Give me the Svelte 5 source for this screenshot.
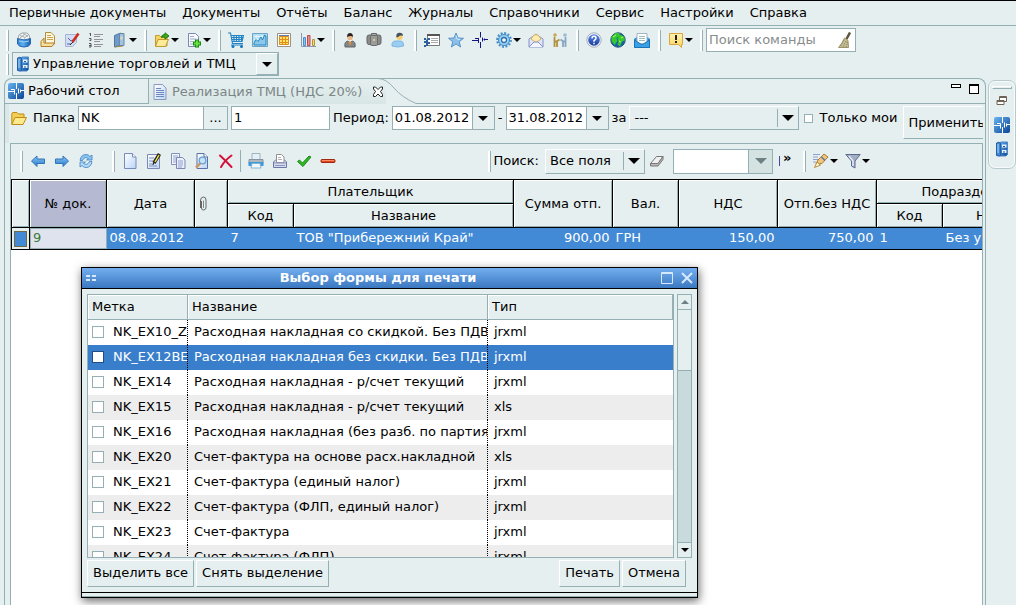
<script>
  const menus = ['Первичные документы', 'Документы', 'Отчёты', 'Баланс', 'Журналы', 'Справочники', 'Сервис', 'Настройки', 'Справка'];

  const toolbar = [
    [['box', 'Товары'], ['papers', 'Документы'], ['sign', 'Подпись'], ['list', 'Список'], ['book', 'Журнал', true]],
    [['folderGo', 'Открыть', true], ['docAdd', 'Создать', true]],
    [['cart', 'Продажи'], ['chart', 'График'], ['grid', 'Таблица'], ['bars', 'Диаграмма', true]],
    [['man', 'Сотрудник'], ['case', 'Портфель'], ['user', 'Контрагент']],
    [['log', 'Протокол'], ['star', 'Избранное'], ['cross', 'Рабочий стол'], ['gear', 'Параметры', true], ['mail', 'Почта'], ['deal', 'Сделки']],
    [['help', 'Помощь'], ['globe', 'Сайт'], ['letter', 'Письмо']],
    [['note', 'Заметка', true]]
  ];

  const docTools = [
    [['left', 'Назад'], ['right', 'Вперёд'], ['refresh', 'Обновить']],
    [['page', 'Новый'], ['edit', 'Изменить'], ['copy', 'Копировать'], ['preview', 'Просмотр'], ['del', 'Удалить']],
    [['printer', 'Печать'], ['print2', 'Печать формы'], ['check', 'Провести'], ['minus', 'Отменить']]
  ];

  let forms = $state([
    ['NK_EX10_ZN', 'Расходная накладная со скидкой. Без ПДВ', 'jrxml'],
    ['NK_EX12BEZ', 'Расходная накладная без скидки. Без ПДВ', 'jrxml'],
    ['NK_EX14', 'Расходная накладная - р/счет текущий', 'jrxml'],
    ['NK_EX15', 'Расходная накладная - р/счет текущий', 'xls'],
    ['NK_EX16', 'Расходная накладная (без разб. по партиям)', 'jrxml'],
    ['NK_EX20', 'Счет-фактура на основе расх.накладной', 'xls'],
    ['NK_EX21', 'Счет-фактура (единый налог)', 'jrxml'],
    ['NK_EX22', 'Счет-фактура (ФЛП, единый налог)', 'jrxml'],
    ['NK_EX23', 'Счет-фактура', 'jrxml'],
    ['NK_EX24', 'Счет-фактура (ФЛП)', 'jrxml']
  ].map(([code, name, type]) => ({ code, name, type, checked: false })));
  let selected = $state('NK_EX12BEZ');

  const setAll = (value) => forms.forEach((f) => (f.checked = value));

  const sheet = '<path d="M3 .5h7l3.500 3.500v11.500H3z" fill="url(#paper)" stroke="#5b6fa8"/><path d="M10 .5V4h3.500" fill="#fff" stroke="#5b6fa8"/>';
  const smallMan = '<path d="M3 15q-1-5.500 3-6l2 2 2-2q4 .5 3 6z"';

  const icons = {
    box: '<path d="M2 6l1-3 3-2 5 0 2 2 1 3-2 2H4z" fill="#f4f7f7" stroke="#9aa4a4"/><path d="M4 3.500l5 2M7 1.500l5 3M4 6l5-4M8 6.500l4-3.500" stroke="#a5abab"/><path d="M1.500 6.500q6.500 3 13 0V12q-1.500 3-6.500 3t-6.500-3z" fill="url(#tub)" stroke="#2468b4"/><path d="M3 9q5 2 10 0" stroke="#9cd2f8" fill="none"/>',
    papers: '<path d="M5.500.5h5.500L14.500 4v8h-9z" fill="#fff8dc" stroke="#b58a3c"/><path d="M7 3.500h4M7 5.500h6M7 7.500h6" stroke="#c9a253"/><path d="M1 9.500L4 6v5h10.500l-2.500 3.500H1z" fill="#f8df9c" stroke="#b08030"/>',
    sign: '<path d="M1.500 2.500h11v8l-4 4h-7z" fill="#d3ddf3" stroke="#a5b3d4"/><path d="M4 6l3 3 2-1M3 12h4" stroke="#4662a8" fill="none"/><path d="M14.500 1.500L8.500 10" stroke="#cf2a1b" stroke-width="2.500"/><path d="M9 10l-3 3" stroke="#333"/>',
    list: '<path d="M6 2.500h9M6 4.500h6M6 7.500h9M6 9.500h6M6 12.500h9M6 14.500h7" stroke="#909494"/><path d="M2.500 1v3M1.500 1.500h1M1 6.500h2v2H1.500M1 11.500h2v2H1M3 13v2H1" stroke="#555" fill="none"/>',
    book: '<path d="M2.500 3.500l6-2.500v12l-6 2z" fill="#6d9ccb" stroke="#4f789f"/><path d="M7.500 1.500h4.500v12H7.500z" fill="#a3c2de" stroke="#6488a8"/><path d="M8.500 4.500h2v3h-2z" fill="#e9dfb2"/><path d="M3 15l8-1" stroke="#a58748"/>',
    folderGo: '<path d="M1.500 14V3.500h4L7 5h6v9z" fill="#f4d35e" stroke="#c29a30"/><path d="M1.500 14.500L4 7.500h10.500l-3 7z" fill="#fdeb98" stroke="#c29a30"/><path d="M7.500 5.500Q7.500 2.500 11 2.500V.8L15 4l-4 3V5.300Q9 4.500 7.500 5.500z" fill="#3cab1e" stroke="#1d7a11"/>',
    docAdd: '<path d="M2.500 1.500h7l3 3v10h-10z" fill="#f7f9ff" stroke="#7c88b2"/><path d="M4 4.500h4M4 7h6M4 9.500h3M4 12h3" stroke="#9fabd0"/><path d="M11 7.500v8M7 11.500h8" stroke="#128a10" stroke-width="4"/><path d="M11 8.500v6M8 11.500h6" stroke="#6ade3e" stroke-width="2"/>',
    cart: '<path d="M0 1h2.500l2 10.500H15M3 3.500h12.500l-1.500 6H4.500M3.500 5.500h11.500M4 7.500h10.500M6 3.500v6M8.500 3.500v6M11 3.500v6M13.500 3.500v6M3 13h12" fill="none" stroke="#2484c8" stroke-width="1.200"/><circle cx="5" cy="14.500" r="1.500" fill="#1378bf"/><circle cx="13.500" cy="14.500" r="1.500" fill="#1378bf"/>',
    chart: '<path d="M.5 1.500h15v13H.5z" fill="#b4def4" stroke="#6aa5c8"/><path d="M2 4.500h12M2 7.500h12M5 3v10M10 3v10" stroke="#e0f2fb"/><path d="M2 11l2-3.500 2 2 3-4.500 1.500 3 2-5 1.500 1V13H2z" fill="#8cc8ec" stroke="#2b84bb"/>',
    grid: '<path d="M1.500 1.500h13v13h-13z" fill="#fff" stroke="#9c9184"/><path d="M3 4h10v8.500H3z" fill="#ffe65a"/><path d="M3.500 4.500h9v8h-9zM6.500 4v8.500M9.500 4v8.500M3 7.500h10M3 10.500h10" fill="none" stroke="#e08a20"/><path d="M3 3.500h10" stroke="#5a7fb8" />',
    bars: '<path d="M1.500 1v13.500H16" fill="none" stroke="#8c97b5"/><path d="M3.500 5.500h2v8h-2z" fill="#8dc5f0" stroke="#4c8fc5"/><path d="M7.500 3.500h2.500v10H7.500z" fill="#ea8d8c" stroke="#b94a50"/><path d="M12.500 7.500h2v6h-2z" fill="#f5dc6c" stroke="#b39638"/>',
    man: smallMan + ' fill="#80888a" stroke="#5f6668"/><path d="M6.500 9.500h3l-1.500 5z" fill="#f0892f"/><circle cx="8" cy="5.500" r="2.800" fill="#e9b788"/><path d="M5 5q0-4 3-4t3 4q-2-2-6 0z" fill="#2a2320"/>',
    case: '<path d="M5.500 3V1.500h5V3" fill="none" stroke="#666"/><rect x="1" y="3" width="14" height="9.500" rx="2" fill="#8b8b8b" stroke="#656565"/><rect x="4.500" y="3.500" width="7" height="10" rx="1" fill="#9b9b9b" stroke="#6b6b6b"/><path d="M7 7h2v2H7z" fill="#d9c98f"/>',
    user: '<path d="M2 14q-.5-5 4-5h4q4 0 3.500 5-5.500 2-11.500 0z" fill="#9bcdf3" stroke="#7db6e0"/><circle cx="9.500" cy="5" r="3" fill="#f6cf6a"/><path d="M6.500 5.500Q5.500 1.500 9 .8q4-.3 4 3-3-1-4.500 1z" fill="#44515f"/>',
    log: '<path d="M3.500 2.500h12v11h-12z" fill="#fff" stroke="#777"/><path d="M3.500 2.500h12v1h-12z" stroke="#555"/><path d="M7 6.500h7M7 8.500h7M7 10.500h7" stroke="#aaa"/><path d="M0 6h2v1.500h2V6h2v2H4v2h2v2H4v2H2v1H0v-2h2v-2H0V9h2V8H0z" fill="#2c5f9e"/>',
    star: '<path d="M8 1l2 5 5.500.3-4.300 3.400 1.500 5.300L8 12l-4.700 3 1.500-5.300L.5 6.300 6 6z" fill="#8cc0ea" stroke="#5893c8"/><path d="M8 3.500l1 3.500 3 .5" stroke="#d5ebfb" fill="none"/>',
    cross: '<path d="M0 8.500h6.500M10 7.500h1.500M12.500 7.500H16M8.500 0v5.500M8.500 10v6M6.500 6v5M3 6.500h3M10.500 5.500v4M12.500 6.500v2" stroke="#15158a" fill="none"/>',
    gear: '<circle cx="8" cy="8" r="6.700" fill="none" stroke="#4a93cc" stroke-width="2.400" stroke-dasharray="2 1.500"/><circle cx="8" cy="8" r="5.500" fill="#9fd0f3" stroke="#3d88c4"/><circle cx="8" cy="8" r="2.500" fill="#f4fafc" stroke="#2b70ab" stroke-width="1.300"/>',
    mail: '<path d="M1 7l7-5 7 5v8H1z" fill="#dfe5fa" stroke="#8492c8"/><path d="M3 7q5-9 10 0l-5 3.500z" fill="#ffecae" stroke="#d4b464"/><path d="M1 15l5-5h4l5 5" fill="#f2f5ff" stroke="#8492c8"/>',
    deal: '<circle cx="3" cy="3" r="1.800" fill="#c9a65a"/><circle cx="13" cy="3" r="1.800" fill="#9cb8d2"/><path d="M2.500 5v4.500h2l3-2M2.500 9v6M5 10v5" fill="none" stroke="#b0913e" stroke-width="1.800"/><path d="M13.500 5v4.500h-2l-3-2M13.500 9v6M11 10v5" fill="none" stroke="#86a5c0" stroke-width="1.800"/>',
    help: '<circle cx="8" cy="8" r="7.200" fill="#f4f6fb" stroke="#a5abba"/><circle cx="8" cy="8" r="5.800" fill="url(#royal)"/><path d="M6 6.500Q6 4.300 8 4.300t2 1.900Q10 7.300 8 8.700v1M8 10.800v1.500" stroke="#fff" stroke-width="1.500" fill="none"/>',
    globe: '<circle cx="8" cy="8" r="7.200" fill="#1760ac" stroke="#27517b"/><path d="M1.500 5l4-4 4 0 0 3-3 2 1 3-3 4-3-4zM10 2.500l4 2 1 4-3 1-2 5-2.500-2 1-3-1-3z" fill="#36c92e"/><path d="M3 5l3-2M11 6l2-1M9 9l2 1" stroke="#c8f56a"/>',
    letter: '<path d="M0 7l8-5.500L16 7v8.500H0z" fill="#2c8fd9"/><path d="M3 1.500h10V10l-5 2.500L3 10z" fill="#fff" stroke="#a0b4c4"/><path d="M5 4.500h6M5 6.500h6M5 8.500h6" stroke="#9bb"/><path d="M.5 8l6 4h3l6-4v7.500H.5z" fill="#38a0e6" stroke="#1c72b4"/>',
    note: '<path d="M1.500 1.500h13v11h-1v3l-3-3h-9z" fill="url(#amber)" stroke="#dba43c"/><path d="M8 3v5" stroke="#222" stroke-width="2"/><path d="M8 9v2" stroke="#222" stroke-width="2"/>',
    cabinet: '<path d="M5 2.500L7 1h6.500v12.500L12 15H5z" fill="url(#blue)" stroke="#4a86c8"/><path d="M2.500 2q2.500-1.500 4 0v12.500q-2 1-4 0z" fill="#3f88d0" stroke="#2460a8"/><path d="M4 3v9" stroke="#b4dcfa"/><path d="M8 3.500h4.500v3H8zM8 9h4.500v3H8z" fill="#e6f3ff"/><path d="M9 5.500h2M9 11h2" stroke="#15539c"/>',
    desktop: '<rect width="16" height="16" rx="2" fill="url(#blue)"/><path d="M0 8.500h6.500M8.500 0v6M8.500 10v6M3 6.500h3.500v5M10.500 5.500v5M12.500 6.500v3M12 7.500h4" stroke="#fff" fill="none"/>',
    doc: '<path d="M2 .5h8.500l3.500 3.500v11.500H2z" fill="url(#paper)" stroke="#8d98c0"/><path d="M4 4.500h5M4 6.500h8M4 8.500h8M4 10.500h8M4 12.500h8" stroke="#6d88bd"/>',
    folder: '<path d="M.8 14V3.500L2 2.500h4L7.500 4H13v4" fill="#f4cf52" stroke="#c08a18"/><path d="M.8 14.500L4 7.500h11.500L12 14.500z" fill="#ffeb8c" stroke="#c08a18"/>',
    left: '<path d="M1.500 8l5.500-5v3h7.500v4.500H7v3z" fill="url(#sky)" stroke="#2f74b8"/>',
    right: '<path d="M14.500 8L9 3v3H1.500v4.500H9v3z" fill="url(#sky)" stroke="#2f74b8"/>',
    refresh: '<path d="M2 7.500Q3 1.500 8 1.500q2.500 0 4 2L14 2v5H8.500L10.500 5.500Q6.500 3 4.500 7.500z" fill="#8cc4f2" stroke="#3a80c0" stroke-width=".8"/><path d="M14 8.500q-1 6-6 6-2.500 0-4-2L2 14V9h5.500L5.500 10.500q4 2.500 6-2z" fill="#b4dafa" stroke="#3a80c0" stroke-width=".8"/>',
    page: '<path d="M2.500.5h8l3.500 3.500v11.500H2.500z" fill="url(#paper)" stroke="#7a8abc"/><path d="M10.500.5V4H14" fill="#fff" stroke="#7a8abc"/>',
    edit: '<path d="M1.500 1.500h12v14h-12z" fill="url(#paper)" stroke="#7c88b2"/><path d="M3 5h5M3 8h4M3 11h4M3 13h8" stroke="#7f91bd"/><path d="M13.500 1L8 10" stroke="#222" stroke-width="3.500"/><path d="M13 2L9 9" stroke="#f5e431" stroke-width="1.500"/><path d="M8 9l-1 3" stroke="#222"/>',
    copy: '<path d="M1.500 .5h8v11h-8z" fill="#f4f7ff" stroke="#8490b8"/><path d="M3 3h5M3 5h3M3 7h3M3 9h3" stroke="#92a3ca"/><path d="M6.500 4.500h6l2.500 2.500v8.500H6.500z" fill="#e8efff" stroke="#7c88b2"/><path d="M8 8h5M8 10h5M8 12h5M8 14h4" stroke="#92a3ca"/>',
    preview: sheet + '<circle cx="8.500" cy="7.500" r="3.300" fill="#c5e4fa" stroke="#6c9fca" stroke-width="1.300"/><path d="M6 10.500l-4 4" stroke="#c99a68" stroke-width="2.500"/>',
    del: '<path d="M2 2.500Q8 8 13.500 14M13.500 2.500Q6.500 7.500 3 14" stroke="#d3123c" stroke-width="2" fill="none" stroke-linecap="round"/>',
    printer: '<path d="M4 .5h8V7H4z" fill="#e2f1fb" stroke="#a0b4b8"/><path d="M1 6.500h14v4H1z" fill="#b0b8be" stroke="#88949c"/><path d="M.5 9h15v4H.5z" fill="#3c9ada"/><path d="M4 10.500h8l1 4.500H3z" fill="#eef8ff" stroke="#8bb4d0"/>',
    print2: '<path d="M1.500 9L4 6.500h8L14.500 9v5.500h-13z" fill="#d4dbee" stroke="#6c78a4"/><path d="M4.500 1.500h5L12 4v5.500H4.500z" fill="#fff" stroke="#909090"/><path d="M6 4.500h3M6 6.500h4" stroke="#b0b0b0"/><path d="M2 10h12M3 12.500h10" stroke="#8d98c0"/>',
    check: '<path d="M1.500 8.500l2-1.500 3 3L13 3l2 1-8 9.500z" fill="#2eb91f" stroke="#1c8a1a"/>',
    minus: '<rect x="1" y="6.500" width="14" height="3" rx="1" fill="#e04a20" stroke="#a02812"/><path d="M2 7.500h12" stroke="#ff8a60"/>',
    eraser: '<path d="M1.500 10.500l6-7H14l-5 7z" fill="#efefef" stroke="#777"/><path d="M1.500 10.500H9L14 3.500v3l-5 6.500H1.500z" fill="#bbb" stroke="#777"/>',
    search: '<path d="M0 1.500h7M0 4h5M0 6.500h5M0 9h3" stroke="#8fa0d4"/><path d="M3 11l2-4 6-6 4 3-6 6.500z" fill="#f2c476" stroke="#a87c34"/><path d="M8.500 4l3.500 3.500" stroke="#6474b4" stroke-width="1.500"/><path d="M1.500 14.500L4 9l3.500 3z" fill="#fff6ce" stroke="#b98b3a"/>',
    funnel: '<path d="M.8 1.500h14.400L10 8v7l-3.500-2V8z" fill="#a3adc4" stroke="#5d6a8e"/><path d="M4 3l4 5v5" stroke="#e6ebf7" fill="none" stroke-width="1.500"/>',
    broom: '<path d="M13 .5L9.500 7" stroke="#5c563e" stroke-width="2.500"/><path d="M7.500 6L11 8.500l.5 7H1.500Q5.500 11 7.500 6z" fill="#c6bf94" stroke="#9b946c"/><path d="M7 8l-4 7M9 9l-3 6M10.500 10L9 15" stroke="#837c58" stroke-dasharray="1 1"/>',
    clip: '<path d="M5.500 5v7q0 2 2 2t2.500-2V4Q10 1 7.500 1T4.500 4v8" fill="none" stroke="#666"/><path d="M7.500 4.500V12" stroke="#888"/>',
    restore: '<path d="M5.500 3.500h7v5h-7zM5.500 4.500h7M3 7.500h7v4H3zM3 8.500h7" fill="#fff" stroke="#6e6257"/>',
    close: '<path d="M3.500 3h2L8 5.500 10.500 3h2v2L10.500 7.500 12.500 10.500v2h-2L8 10l-2.500 2.500h-2v-2L5.500 7.500 3.500 5z" fill="#fff" stroke="#222"/>'
  };
</script>

{#snippet icon(name)}
  <svg class="icon" viewBox="0 0 16 16" aria-hidden="true">{@html icons[name]}</svg>
{/snippet}

{#snippet tools(items)}
  {#each items as [name, label, drop]}
    <button class="tool" class:drop aria-label={label}>
      {@render icon(name)}
      {#if drop}<i class="arrow"></i>{/if}
    </button>
  {/each}
{/snippet}

<svg class="defs" aria-hidden="true">
  <defs>
    <linearGradient id="blue" x2="1" y2="1"><stop stop-color="#67b4f0" /><stop offset="1" stop-color="#0b4596" /></linearGradient>
    <linearGradient id="tub" x2="1" y2="0"><stop stop-color="#2f80cc" /><stop offset=".4" stop-color="#5cb0ee" /><stop offset="1" stop-color="#1a5cac" /></linearGradient>
    <linearGradient id="sky" x2="0" y2="1"><stop stop-color="#8cc8f8" /><stop offset="1" stop-color="#2478c8" /></linearGradient>
    <linearGradient id="royal" x2="0" y2="1"><stop stop-color="#5f8be6" /><stop offset="1" stop-color="#143a9e" /></linearGradient>
    <linearGradient id="paper" x2="1" y2="1"><stop stop-color="#fff" /><stop offset="1" stop-color="#bcd4f6" /></linearGradient>
    <linearGradient id="amber" x2="0" y2="1"><stop stop-color="#fff3b0" /><stop offset="1" stop-color="#fbd25a" /></linearGradient>
  </defs>
</svg>

<div class="app">
  <nav class="menu">
    {#each menus as m}<button>{m}</button>{/each}
  </nav>

  <div class="bar first">
    {#each toolbar as group}
      <span class="sep"></span>
      {@render tools(group)}
    {/each}
    <span class="sep"></span>
    <label class="command">
      <input type="text" placeholder="Поиск команды" aria-label="Поиск команды" />
      {@render icon('broom')}
    </label>
  </div>

  <div class="bar second">
    <span class="sep"></span>
    <label class="perspective">
      {@render icon('cabinet')}
      <select aria-label="Рабочее место"><option>Управление торговлей и ТМЦ</option></select>
      <span class="knob"><i class="arrow big"></i></span>
    </label>
  </div>

  <div class="work">
    <main class="panel">
      <div class="tabs">
        <button class="tab">{@render icon('desktop')}Рабочий стол</button>
        <div class="tab active">
          {@render icon('doc')}<span>Реализация ТМЦ (НДС 20%)</span>
          <button class="close" aria-label="Закрыть вкладку">{@render icon('close')}</button>
        </div>
        <svg class="curve" viewBox="0 0 40 26" aria-hidden="true">
          <path d="M0 .5Q8 .5 16 10T38 25.500H40" />
        </svg>
        <div class="rest">
          <button class="win min" aria-label="Свернуть"></button>
          <button class="win max" aria-label="Развернуть"></button>
        </div>
      </div>

      <form class="filter" onsubmit={(e) => e.preventDefault()}>
        {@render icon('folder')}
        <label for="folder">Папка</label>
        <span class="field tall">
          <input id="folder" class="w124" value="NK" />
          <button type="button" class="knob">...</button>
        </span>
        <input class="num" value="1" aria-label="Номер папки" />
        <label for="from">Период:</label>
        <span class="field date">
          <input id="from" value="01.08.2012" />
          <button type="button" class="knob" aria-label="Календарь"><i class="arrow big"></i></button>
        </span>
        <span>-</span>
        <span class="field date">
          <input value="31.08.2012" aria-label="Конец периода" />
          <button type="button" class="knob" aria-label="Календарь"><i class="arrow big"></i></button>
        </span>
        <label for="span">за</label>
        <span class="pick long">
          <select id="span"><option>---</option></select><i class="arrow wide"></i>
        </span>
        <label class="mine"><input type="checkbox" />Только мои</label>
        <button class="apply">Применить</button>
      </form>

      <section class="inner">
        <div class="bar doc">
          <span class="sep"></span>
          {@render tools(docTools[0])}
          <span class="gap"></span>
          <span class="sep"></span>
          {@render tools(docTools[1])}
          <span class="rule"></span>
          {@render tools(docTools[2])}
          <div class="find">
            <span class="sep"></span>
            <label for="scope">Поиск:</label>
            <span class="pick">
              <select id="scope"><option>Все поля</option></select><i class="arrow wide"></i>
            </span>
            {@render tools([['eraser', 'Очистить']])}
            <span class="field query">
              <input aria-label="Строка поиска" />
              <button class="knob" aria-label="История поиска"><i class="arrow wide dim"></i></button>
            </span>
            <button class="more" aria-label="Ещё"><i></i><span>»</span></button>
            <span class="sep"></span>
            {@render tools([['search', 'Найти', true], ['funnel', 'Фильтр', true]])}
          </div>
        </div>

        <div class="sheet">
          <table class="docs">
            <colgroup>
              <col style:width="18px" /><col style:width="77px" /><col style:width="88px" /><col style:width="33px" />
              <col style:width="66px" /><col style:width="220px" /><col style:width="99px" /><col style:width="66px" />
              <col style:width="99px" /><col style:width="99px" /><col style:width="66px" /><col style:width="132px" />
            </colgroup>
            <thead>
              <tr>
                <th rowspan="2"></th>
                <th rowspan="2" class="sorted">№ док.</th>
                <th rowspan="2">Дата</th>
                <th rowspan="2" class="clip">{@render icon('clip')}</th>
                <th colspan="2">Плательщик</th>
                <th rowspan="2">Сумма отп.</th>
                <th rowspan="2">Вал.</th>
                <th rowspan="2">НДС</th>
                <th rowspan="2">Отп.без НДС</th>
                <th colspan="2">Подразделение</th>
              </tr>
              <tr><th>Код</th><th>Название</th><th>Код</th><th>Название</th></tr>
            </thead>
            <tbody>
              <tr>
                <td class="mark"><i></i></td>
                <td class="focus">9</td>
                <td>08.08.2012</td>
                <td></td>
                <td>7</td>
                <td>ТОВ "Прибережний Край"</td>
                <td class="r">900,00</td>
                <td>ГРН</td>
                <td class="r">150,00</td>
                <td class="r">750,00</td>
                <td>1</td>
                <td>Без указания</td>
              </tr>
            </tbody>
          </table>
        </div>
      </section>
    </main>

    <aside class="trim">
      <span class="grip"></span>
      <button aria-label="Восстановить">{@render icon('restore')}</button>
      <button aria-label="Рабочий стол">{@render icon('desktop')}</button>
      <button aria-label="Торговля">{@render icon('cabinet')}</button>
    </aside>
  </div>
</div>

<div class="dialog" role="dialog" aria-labelledby="dlg-title">
  <header>
    <span class="dots"><i></i><i></i><i></i><i></i></span>
    <h1 id="dlg-title">Выбор формы для печати</h1>
    <button aria-label="Развернуть окно"><svg viewBox="0 0 14 14"><path d="M1.500 1.500h11v11h-11zM1.500 2.500h11" /></svg></button>
    <button aria-label="Закрыть окно"><svg viewBox="0 0 14 14"><path d="M2 2l10 10M12 2L2 12" stroke-width="2" /></svg></button>
  </header>
  <div class="body">
    <div class="listing">
      <div class="scroller">
        <table class="forms">
          <colgroup><col style:width="100px" /><col style:width="300px" /><col /></colgroup>
          <thead><tr><th>Метка</th><th>Название</th><th>Тип</th></tr></thead>
          <tbody>
            {#each forms as f (f.code)}
              <tr class:selected={selected === f.code} onclick={() => (selected = f.code)}>
                <td><label><input type="checkbox" bind:checked={f.checked} />{f.code}</label></td>
                <td>{f.name}</td>
                <td>{f.type}</td>
              </tr>
            {/each}
          </tbody>
        </table>
      </div>
      <div class="scrollbar">
        <button aria-label="Вверх"><i class="arrow up"></i></button>
        <span class="thumb"></span>
        <span class="track"></span>
        <button aria-label="Вниз"><i class="arrow"></i></button>
      </div>
    </div>
    <div class="actions">
      <button onclick={() => setAll(true)}>Выделить все</button>
      <button onclick={() => setAll(false)}>Снять выделение</button>
      <span class="spring"></span>
      <button>Печать</button>
      <button>Отмена</button>
    </div>
  </div>
  <footer></footer>
</div>

<style>
  :global(body) {
    background: #e6efef;
    overflow: hidden;
  }
  .app, .dialog {
    --line: #94b0b5;
    --bg: #e6efef;
    font: 13px/18px "DejaVu Sans", sans-serif;
    color: #000;
    box-sizing: border-box;
  }
  .app *, .dialog * { box-sizing: border-box; }
  .app { display: flex; flex-direction: column; height: 100vh; border-top: 1px solid #000; background: var(--bg); }
  .defs { position: absolute; width: 0; height: 0; }
  button, input, select { font: inherit; color: inherit; margin: 0; padding: 0; border: 0; background: none; border-radius: 0; outline: 0; }
  select, input { appearance: none; min-width: 0; }
  button { white-space: nowrap; }
  .icon { width: 16px; height: 16px; flex: none; display: block; }

  .menu { display: flex; gap: 16px; height: 25px; padding: 0 9px; border-bottom: 1px solid var(--line); white-space: nowrap; }

  .bar { display: flex; align-items: center; height: 26px; padding-left: 2px; flex: none; }
  .first { padding-top: 2px; }
  .second { align-items: flex-start; }
  .sep { width: 10px; height: 21px; flex: none; display: flex; justify-content: center; }
  .sep::before { content: ""; width: 2px; border-right: 1px solid var(--line); background: #fff; }
  .second .sep { margin-top: 2px; }
  .tool { width: 24px; height: 24px; padding: 0 4px; display: flex; align-items: center; gap: 1px; flex: none; }
  .tool.drop { width: 32px; padding-right: 0; }
  .arrow { width: 0; height: 0; flex: none; border: 4px solid transparent; border-top-color: #000; border-bottom: 0; }
  .arrow.big { border-width: 5px 5px 0; }
  .arrow.wide { border-width: 6px 6px 0; }
  .arrow.up { border: 4px solid transparent; border-bottom-color: #6d8185; border-top: 0; }
  .arrow.dim { border-top-color: #6d8185; }
  .command { display: flex; align-items: center; width: 150px; height: 24px; border: 1px solid var(--line); background: #fff; padding: 0 2px; }
  .command input { flex: 1; }
  .command input::placeholder { color: #888c8c; opacity: 1; }
  .perspective { display: flex; align-items: center; width: 267px; height: 24px; border: 1px solid var(--line); padding-left: 2px; gap: 2px; }
  .perspective select { flex: 1; height: 20px; }
  .knob { width: 22px; flex: none; align-self: stretch; display: flex; align-items: center; justify-content: center; border: 1px solid; border-color: #fff var(--line) var(--line) #fff; background: var(--bg); }

  .work { flex: 1; min-height: 0; display: flex; gap: 2px; padding-left: 4px; }
  .panel { flex: 1; min-width: 0; display: flex; flex-direction: column; border: 1px solid var(--line); border-bottom: 0; border-radius: 8px 8px 0 0; }
  .tabs { display: flex; height: 25px; flex: none; white-space: nowrap; }
  .tab { display: flex; align-items: center; gap: 4px; width: 144px; padding-left: 3px; flex: none; border-right: 1px solid var(--line); border-bottom: 1px solid var(--line); }
  .tab.active { width: auto; border: 0; color: #7b8686; background: linear-gradient(#e6efef, #d8e6e6); }
  .close { width: 16px; height: 16px; margin-left: 4px; }
  .curve { width: 40px; height: 26px; margin: -1px 0 0 -8px; flex: none; position: relative; pointer-events: none; }
  .curve path { fill: none; stroke: var(--line); }
  .rest { flex: 1; display: flex; justify-content: flex-end; gap: 8px; padding: 5px 6px 0 0; border-bottom: 1px solid var(--line); }
  .win { width: 10px; height: 10px; border: 1px solid #000; background: #fff; }
  .win.min { height: 4px; }
  .win.max { border-top-width: 2px; }

  .filter { display: flex; align-items: flex-start; height: 39px; padding: 2px 0 0 2px; margin-right: 2px; gap: 3px; border-left: 4px solid #dbe7e7; overflow: hidden; white-space: nowrap; line-height: 24px; flex: none; }
  .filter .icon { margin: 4px 3px 0 0; }
  .filter .field, .filter .num, .filter .pick { height: 24px; flex: none; }
  .field { display: flex; border: 1px solid var(--line); background: #fff; }
  .field input, .num { padding: 0 2px; }
  .w124 { width: 124px; }
  .tall .knob { width: 24px; }
  .num { width: 99px; border: 1px solid var(--line); background: #fff; }
  .date input { width: 79px; }
  .field .knob { border-width: 0 0 0 1px; border-left-color: var(--line); }
  .pick { display: flex; align-items: center; border: 1px solid; border-color: #fff var(--line) var(--line) #fff; padding-right: 4px; }
  .pick select { flex: 1; height: 18px; line-height: 18px; padding-left: 4px; border-right: 1px solid var(--line); margin-right: 4px; }
  .long { width: 170px; }
  .mine { display: flex; align-items: center; gap: 6px; padding: 0 3px 0 2px; flex: none; }
  .mine input { width: 9px; height: 9px; border: 1px solid var(--line); background: #fff; }
  .apply { height: 33px; padding: 0 4px; border: 1px solid; border-color: #fff var(--line) var(--line) #fff; flex: none; }

  .inner { flex: 1; min-height: 0; display: flex; flex-direction: column; margin: 0 2px 0 5px; border: 1px solid var(--line); border-bottom: 0; overflow: hidden; }
  .doc { height: 35px; padding: 0 0 1px 5px; }
  .gap { width: 10px; }
  .rule { width: 6px; height: 22px; border-left: 1px solid var(--line); margin-left: 2px; margin-right: -2px; }
  .find { flex: 1; display: flex; align-items: center; justify-content: flex-end; margin-right: 109px; }
  .find .pick { width: 100px; height: 25px; margin-left: 6px; }
  .find > .sep:first-child { justify-content: flex-start; width: 5px; }
  .query { width: 100px; height: 25px; margin-left: 4px; }
  .query input { flex: 1; }
  .query .knob { width: 24px; background: #d4e2e2; }
  .more { display: flex; align-items: center; gap: 3px; width: 26px; padding-left: 6px; }
  .more span { padding-bottom: 6px; font-weight: bold; }
  .more i { width: 1px; height: 10px; background: #4848a0; }

  .sheet { flex: 1; min-height: 0; overflow: hidden; background: #fff; }
  .docs { table-layout: fixed; width: 1063px; border-collapse: collapse; border: 1px solid #000; }
  .docs th { height: 24px; padding: 0; border: 1px solid #000; font-weight: normal; background: var(--bg); box-shadow: inset 1px 1px #fff, inset -1px -1px var(--line); }
  .docs .sorted { background: #b5bad2; }
  .clip .icon { margin-left: 1px; }
  .docs td { height: 22px; padding: 0 3px 1px; background: #438ad6; color: #fff; overflow: hidden; white-space: nowrap; }
  .docs .r { text-align: right; }
  .docs .focus { background: #dfe3ee; color: #3a7a3a; box-shadow: inset 0 0 0 1px var(--line); }
  .docs .mark { padding: 0 2px; border-right: 1px solid #000; background: var(--bg); }
  .mark i { display: block; height: 16px; border: 1px solid #6e6b45; background: #438ad6; }

  .trim { width: 28px; flex: none; align-self: flex-start; display: flex; flex-direction: column; align-items: center; gap: 8px; height: 89px; padding-top: 5px; margin-top: 2px; border: 1px solid #b7cbce; border-radius: 7px; box-shadow: inset 0 0 0 1px #f7fbfb; }
  .grip { width: 20px; height: 3px; margin-bottom: -4px; border: 1px solid; border-color: #fff var(--line) var(--line) #fff; }

  .dialog { position: absolute; left: 81px; top: 267px; width: 617px; border: 1px solid #000; background: var(--bg); box-shadow: 1px 3px 9px rgba(0, 0, 0, 0.6); }
  .dialog header { display: flex; align-items: center; gap: 6px; height: 21px; padding: 0 3px 0 4px; border-bottom: 1px solid #000; background: linear-gradient(#74aef0, #3a78c0); color: #fff; }
  .dialog h1 { flex: 1; margin: 0; text-align: center; font-size: 13px; line-height: 18px; }
  .dialog header button, .dialog header svg { display: block; width: 14px; height: 14px; }
  .dialog header path { fill: none; stroke: #d6e9ff; }
  .dots { display: grid; grid-template-columns: 4px 4px; gap: 2px; }
  .dots i { height: 2px; background: #d6e9ff; }
  .body { padding: 5px; }
  .listing { display: flex; gap: 3px; height: 264px; }
  .scroller { flex: 1; border: 1px solid var(--line); overflow: hidden; background: #fff; }
  .forms { width: 100%; table-layout: fixed; border-collapse: separate; border-spacing: 0; }
  .forms th { height: 25px; padding: 0 4px; text-align: left; font-weight: normal; background: var(--bg); border-right: 1px solid var(--line); border-bottom: 1px solid var(--line); box-shadow: inset 1px 1px #fff; }
  .forms td { height: 25px; padding: 0 0 1px 6px; overflow: hidden; white-space: nowrap; border-right: 1px dotted #000; }
  .forms td:first-child { padding-left: 4px; }
  .forms td:last-child { border: 0; }
  .forms tr:nth-child(even) td { background: #ededed; }
  .forms tr.selected td { background: #387ecb; color: #fff; }
  .forms label { display: flex; align-items: center; gap: 9px; }
  .forms input { width: 12px; height: 12px; flex: none; border: 1px solid var(--line); background: #fff; }
  .forms .selected input { border-color: #1f4e86; }
  input[type="checkbox"]:checked { background: #387ecb; box-shadow: inset 0 0 0 2px #fff; }
  .scrollbar { width: 15px; display: flex; flex-direction: column; border: 1px solid var(--line); }
  .scrollbar button { height: 14px; flex: none; display: flex; align-items: center; justify-content: center; }
  .thumb { height: 62px; border: 1px solid var(--line); border-width: 1px 0; }
  .track { flex: 1; background: #c9dadc; border-bottom: 1px solid var(--line); }
  .actions { display: flex; gap: 2px; padding: 2px 6px 0 0; height: 29px; }
  .actions button { padding: 0 5px 1px; border: 1px solid; border-color: #fff var(--line) var(--line) #fff; }
  .spring { flex: 1; }
  .dialog footer { height: 5px; border-top: 1px solid #000; border-bottom: 1px solid var(--line); }
</style>
